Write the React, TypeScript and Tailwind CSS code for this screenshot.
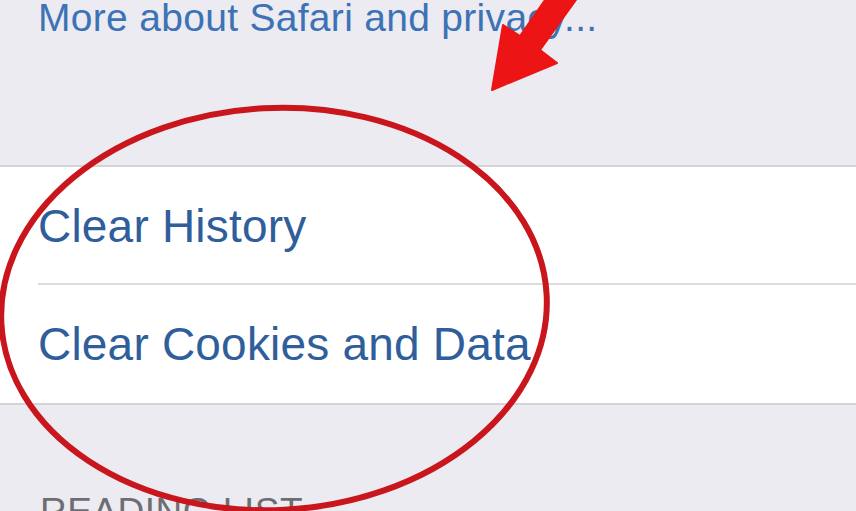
const font = { fontFamily: '"Liberation Sans", Arial, sans-serif' };

function Row({ label, last }: { label: string; last?: boolean }) {
  return (
    <div className="relative h-[118px] flex items-center pl-[38px]">
      <span className="text-[46px] leading-[46px] text-[#2f5e9b] tracking-[0.2px]">{label}</span>
      {!last && <div className="absolute left-[38px] right-0 bottom-0 h-[2px] bg-[#dcdce0]" />}
    </div>
  );
}

// red hand-drawn markup on top of the settings list
function Markup() {
  return (
    <svg className="absolute inset-0 pointer-events-none" width="856" height="511" viewBox="0 0 856 511">
      <ellipse cx="274" cy="309" rx="273" ry="201" fill="none" stroke="#c9161c" strokeWidth="6" transform="rotate(-3 274 309)" />
      <polygon
        points="492,90 503,25 520,36 552,-10 583,-10 540,50 557,63"
        fill="#ec1414"
        stroke="#ec1414"
        strokeWidth="2"
        strokeLinejoin="round"
      />
    </svg>
  );
}

export default function App() {
  return (
    <div className="relative w-[856px] h-[511px] overflow-hidden bg-[#ebebf1]" style={font}>
      <div className="pl-[38px] mt-[-2px] text-[39px] leading-[39px] text-[#3d72b6] tracking-[0.3px] whitespace-nowrap">
        More about Safari and privacy...
      </div>

      <div className="mt-[128px] bg-white border-t-2 border-b-2 border-[#d4d4d8]">
        <Row label="Clear History" />
        <Row label="Clear Cookies and Data" last />
      </div>

      <div className="mt-[88px] pl-[40px] text-[37px] leading-[37px] text-[#6d6d72] tracking-[0.5px]">
        READING LIST
      </div>

      <Markup />
    </div>
  );
}
